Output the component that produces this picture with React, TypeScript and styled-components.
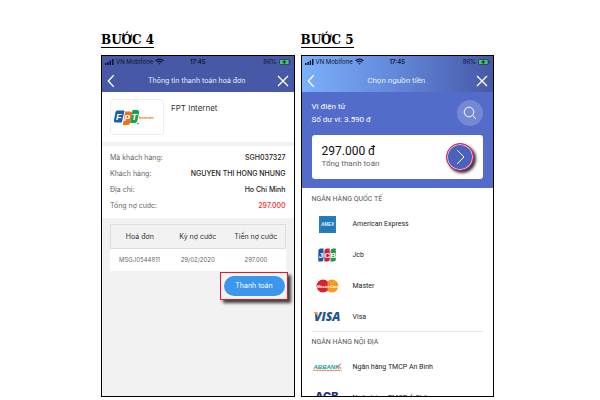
import React from "react";
import styled, { createGlobalStyle } from "styled-components";

const GlobalStyle = createGlobalStyle`
  *, *::before, *::after { box-sizing: border-box; }
  body { margin: 0; background: #fff; }
  button { font: inherit; border: 0; padding: 0; background: none; cursor: pointer; }
  h2, h3, p, dl, dd, ul { margin: 0; padding: 0; }
  svg { display: block; }
`;

const Page = styled.main`
  display: grid;
  grid-template-columns: 1fr 1fr;
  gap: 6px;
  height: 100vh;
  padding: 32px 106px 3px 101px;
`;

const Step = styled.section`
  display: flex;
  flex-direction: column;
  min-width: 0;
  min-height: 0;
`;

const StepTitle = styled.h2`
  align-self: flex-start;
  height: 16px;
  margin-bottom: 7px;
  border-bottom: 1px solid #000;
  font: bold 12px/16px "DejaVu Serif", serif;
  color: #000;
`;

const Phone = styled.div<{ $tone: "grey" | "white" }>`
  flex: 1;
  min-height: 0;
  overflow: hidden;
  border: 1px solid #000;
  background: ${(p) => (p.$tone === "grey" ? "#f2f2f2" : "#fff")};
  font-family: ${(p) => (p.$tone === "grey" ? "Inter, sans-serif" : "Roboto, sans-serif")};
  font-size: ${(p) => (p.$tone === "grey" ? "7px" : "8px")};
  line-height: 12px;
`;

const Header = styled.header<{ $gradient?: boolean }>`
  height: 36px;
  background: ${(p) =>
    p.$gradient ? "linear-gradient(90deg, #7bb0fa 0%, #6287d8 50%, #4658a6 100%)" : "#4759a6"};
`;

const StatusBar = styled.div`
  display: grid;
  grid-template-columns: 1fr auto 1fr;
  align-items: center;
  height: 11px;
  padding: 0 3px;
  font: 6px/11px Inter, sans-serif;
  color: #10142c;
`;

const StatusGroup = styled.span<{ $end?: boolean }>`
  display: flex;
  align-items: center;
  justify-content: ${(p) => (p.$end ? "flex-end" : "flex-start")};
  gap: 2px;
  white-space: nowrap;
`;

const Clock = styled.time`
  font-weight: 600;
`;

const NavBar = styled.div`
  display: grid;
  grid-template-columns: 16px 1fr 16px;
  align-items: center;
  height: 25px;
  padding: 2px 3px 0 1px;
  color: #fff;
`;

const NavTitle = styled.h3`
  text-align: center;
  font: inherit;
  color: #e9ecfa;
  white-space: nowrap;
`;

const IconButton = styled.button`
  display: grid;
  place-items: center;
  width: 16px;
  height: 16px;
  color: inherit;
`;

const Provider = styled.div`
  display: flex;
  gap: 7px;
  height: 50px;
  padding: 7px 8px;
  background: #fff;
  font-size: 8px;
  color: #333;
`;

const LogoFrame = styled.div`
  display: flex;
  align-items: center;
  width: 54px;
  height: 36px;
  padding-left: 2px;
  border: 1px solid #eee;
  border-radius: 3px;
`;

const ProviderName = styled.p`
  padding-top: 3px;
  line-height: 12px;
`;

const Details = styled.dl`
  display: grid;
  gap: 4px;
  margin-top: 4px;
  padding: 6px 8px;
  background: #fff;
`;

const DetailRow = styled.div`
  display: flex;
  justify-content: space-between;
  color: #666;
  white-space: nowrap;
`;

const DetailValue = styled.dd<{ $due?: boolean }>`
  font-weight: 500;
  color: ${(p) => (p.$due ? "#f52b35" : "#222")};
`;

const Bills = styled.div`
  padding: 6px 8px 0;
`;

const BillTable = styled.table`
  width: 100%;
  table-layout: fixed;
  border-collapse: collapse;
  font-size: 6px;
  text-align: center;
  color: #666;
  background: #fff;
`;

const HeadCell = styled.th`
  height: 24px;
  padding: 0;
  border: solid #ddd;
  border-width: 1px 0;
  background: #f2f2f2;
  font-size: 7px;
  font-weight: 400;
  color: #333;
  &:first-child { border-left-width: 1px; }
  &:last-child { border-right-width: 1px; }
`;

const BodyCell = styled.td`
  height: 22px;
  padding: 0;
`;

const PayHighlight = styled.div`
  width: 68px;
  height: 28px;
  margin: 1px -2px 0 auto;
  padding: 3px 2px 3px 3px;
  border: 1px solid #f01428;
  background: #f4f4f4;
  box-shadow: 3px 3px 3px rgba(0, 0, 0, 0.75);
`;

const PayButton = styled.button`
  width: 100%;
  height: 20px;
  border-radius: 10px;
  background: #3b96ed;
  color: #fff;
`;

const Wallet = styled.div`
  padding: 8px 10px 9px;
  background: #536bc9;
  color: #fff;
`;

const WalletTop = styled.div`
  display: flex;
  justify-content: space-between;
  height: 26px;
  margin-bottom: 9px;
  line-height: 13px;
`;

const SearchButton = styled.button`
  display: grid;
  place-items: center;
  width: 26px;
  height: 26px;
  border-radius: 50%;
  background: #7488d3;
  color: #fff;
`;

const TotalCard = styled.div`
  display: flex;
  align-items: center;
  justify-content: space-between;
  height: 44px;
  padding: 0 9px 0 10px;
  border-radius: 3px;
  background: #fff;
`;

const Amount = styled.p`
  font-size: 12px;
  line-height: 14px;
  color: #111;
`;

const AmountLabel = styled.p`
  line-height: 12px;
  color: #666;
`;

const NextButton = styled.button`
  display: grid;
  place-items: center;
  width: 28px;
  height: 28px;
  border: 1px solid #f01440;
  border-radius: 50%;
  background: #4a62bd;
  box-shadow: inset 0 0 0 1px #dcc8e0, 2px 2px 3px rgba(0, 0, 0, 0.8);
  color: #fff;
`;

const BankGroup = styled.section`
  margin: 0 10px;
  padding: 5px 0 2px;
  font-size: 7px;
  & + & { border-top: 1px solid #e8e8e8; padding-top: 4px; }
`;

const GroupTitle = styled.h3`
  margin-bottom: 7px;
  font: inherit;
  color: #555;
`;

const BankList = styled.ul`
  display: grid;
  gap: 7px;
  list-style: none;
`;

const BankRow = styled.li`
  display: grid;
  grid-template-columns: 31px 1fr;
  gap: 10px;
  align-items: center;
  height: 24px;
  color: #1c1c1c;
  white-space: nowrap;
`;

const LogoSlot = styled.span`
  display: grid;
  place-items: center;
`;

function Status() {
  return (
    <StatusBar>
      <StatusGroup>
        <svg width="9" height="6" viewBox="0 0 9 6" fill="currentColor" aria-hidden="true">
          <path d="M0 4h1.5v2H0zM2.3 3h1.5v3H2.3zM4.6 1.5h1.5V6H4.6zM7 0h1.5v6H7z" />
        </svg>
        VN Mobifone
        <svg width="9" height="7" viewBox="0 0 9 7" fill="none" stroke="currentColor" aria-hidden="true">
          <path d="M.6 2.7a5.5 5.5 0 0 1 7.8 0" strokeWidth="1.4" />
          <path d="M2.1 4.3a3.5 3.5 0 0 1 4.8 0" strokeWidth="1.3" />
          <path d="M3.4 5.3h2.2L4.5 6.7z" fill="currentColor" stroke="none" />
        </svg>
      </StatusGroup>
      <Clock>17:45</Clock>
      <StatusGroup $end>
        86%
        <svg width="12" height="6" viewBox="0 0 12 6" aria-hidden="true">
          <rect x=".4" y=".4" width="10" height="5.2" rx="1.3" fill="none" stroke="#263b50" strokeWidth=".7" />
          <rect x="1" y="1" width="8.5" height="4" rx=".7" fill="#43cc61" />
          <path d="M5.8.6 3 3.4h2L4.6 5.4l3-2.9H5.7z" fill="#15252e" />
          <path d="M11.2 2v2" stroke="#263b50" />
        </svg>
      </StatusGroup>
    </StatusBar>
  );
}

function Top({ title, gradient }: { title: string; gradient?: boolean }) {
  return (
    <Header $gradient={gradient}>
      <Status />
      <NavBar>
        <IconButton aria-label="Quay lại">
          <svg width="8" height="14" viewBox="0 0 8 14" fill="none" stroke="currentColor" strokeWidth="1.3">
            <path d="M6.7 1.300 1.300 7l5.400 5.700" />
          </svg>
        </IconButton>
        <NavTitle>{title}</NavTitle>
        <IconButton aria-label="Đóng">
          <svg width="12" height="12" viewBox="0 0 12 12" stroke="currentColor" strokeWidth="1.3">
            <path d="m1 1 10 10M11 1 1 11" />
          </svg>
        </IconButton>
      </NavBar>
    </Header>
  );
}

function FptLogo() {
  return (
    <svg width="42" height="18" viewBox="0 0 42 18" role="img" aria-label="FPT Internet">
      <path d="M4 2.500h7.500L8.800 14.500H2.500Q.5 14.500 1 12L2.300 5Q2.700 2.500 4 2.500z" fill="#1b5eab" />
      <path d="M12 3.500h5q2.500 0 2 2.500l-1.600 8q-.4 3-3 3h-4.600z" fill="#f26f21" />
      <path d="M19.500 2h4.500q2.500 0 2 2.500l-1.600 8q-.4 2.500-2.600 2.500h-4.600z" fill="#17a34a" />
      <g fill="#fff" fontFamily="Liberation Sans, sans-serif" fontWeight="bold" fontStyle="italic" fontSize="9">
        <text x="3" y="12">F</text>
        <text x="11" y="13">P</text>
        <text x="18.500" y="12">T</text>
      </g>
      <circle cx="25" cy="15.500" r=".8" fill="#1b5eab" />
      <text x="26" y="10.500" fill="#f26f21" fontFamily="Liberation Sans, sans-serif" fontWeight="bold" fontSize="4">
        Internet
      </text>
    </svg>
  );
}

function AmexLogo() {
  return (
    <svg width="17" height="17" viewBox="0 0 17 17" role="img" aria-label="American Express">
      <rect width="17" height="17" fill="#2279b8" />
      <path d="M1 1h15v15H1z" fill="none" stroke="#3d8cc4" strokeWidth=".5" />
      <text x="2" y="10.200" fill="#e4f1fa" fontFamily="Liberation Sans, sans-serif" fontWeight="bold" fontStyle="italic" fontSize="4.500">
        AMEX
      </text>
    </svg>
  );
}

function JcbLogo() {
  return (
    <svg width="18" height="14" viewBox="0 0 18 14" role="img" aria-label="JCB">
      <path d="M2.500.5h3v11q0 2-2 2H.3V3Q.3.5 2.500.5z" fill="#1c5aa8" />
      <path d="M8.700.5h3v11q0 2-2 2H6.400V3Q6.400.5 8.700.5z" fill="#cf2040" />
      <path d="M14.800.5h3v11q0 2-2 2h-3.300V3q0-2.500 2.300-2.500z" fill="#259747" />
      <g fill="#fff" fontFamily="Liberation Sans, sans-serif" fontWeight="bold" fontSize="8">
        <text x=".7" y="9.800">J</text>
        <text x="6.300" y="9.800">C</text>
        <text x="12.300" y="9.800">B</text>
      </g>
    </svg>
  );
}

function MasterLogo() {
  return (
    <svg width="23" height="14" viewBox="0 0 23 14" role="img" aria-label="MasterCard">
      <circle cx="16" cy="7" r="6.500" fill="#f59b22" />
      <circle cx="7" cy="7" r="6.500" fill="#d9222a" />
      <path d="M11.500 2.300a6.500 6.500 0 0 1 0 9.400" fill="#f59b22" />
      <text x="1" y="8.500" fill="#fff" fontFamily="Liberation Sans, sans-serif" fontWeight="bold" fontStyle="italic" fontSize="4">
        MasterCard
      </text>
    </svg>
  );
}

function VisaLogo() {
  return (
    <svg width="31" height="16" viewBox="0 0 31 16" role="img" aria-label="Visa">
      <text x="2" y="12" fill="#1c5596" fontFamily="Open Sans, sans-serif" fontWeight="800" fontStyle="italic" fontSize="12">
        VISA
      </text>
      <path d="M1 3h4L6.200 8Q4.500 4.500 1 3z" fill="#f3a52b" />
    </svg>
  );
}

function AbBankLogo() {
  return (
    <svg width="29" height="9" viewBox="0 0 29 9" role="img" aria-label="ABBANK">
      <text x=".5" y="5.500" fill="#159a9c" fontFamily="Liberation Sans, sans-serif" fontWeight="bold" fontStyle="italic" fontSize="6">
        ABBANK
      </text>
      <path d="m28.800.8-3 2.200 3 2.500h-1.600L24.800 3l2.400-2.200z" fill="#ef6d43" />
      <path d="M.5 7.300h28" stroke="#ee8259" strokeWidth="1.300" strokeDasharray="2.200 .5" />
    </svg>
  );
}

function AcbLogo() {
  return (
    <svg width="27" height="14" viewBox="0 0 27 14" role="img" aria-label="ACB">
      <text x="1" y="9" fill="#1d3384" fontFamily="Inter, sans-serif" fontWeight="800" fontSize="11">
        ACB
      </text>
    </svg>
  );
}

const details = [
  { label: "Mã khách hàng:", value: "SGH037327" },
  { label: "Khách hàng:", value: "NGUYEN THI HONG NHUNG" },
  { label: "Địa chỉ:", value: "Ho Chi Minh" },
  { label: "Tổng nợ cước:", value: "297.000", due: true },
];

const groups = [
  {
    title: "NGÂN HÀNG QUỐC TẾ",
    banks: [
      { name: "American Express", Logo: AmexLogo },
      { name: "Jcb", Logo: JcbLogo },
      { name: "Master", Logo: MasterLogo },
      { name: "Visa", Logo: VisaLogo },
    ],
  },
  {
    title: "NGÂN HÀNG NỘI ĐỊA",
    banks: [
      { name: "Ngân hàng TMCP An Bình", Logo: AbBankLogo },
      { name: "Ngân hàng TMCP Á Châu", Logo: AcbLogo },
    ],
  },
];

export default function App() {
  return (
    <>
      <GlobalStyle />
      <Page>
        <Step>
          <StepTitle>BƯỚC 4</StepTitle>
          <Phone $tone="grey">
            <Top title="Thông tin thanh toán hoá đơn" />
            <Provider>
              <LogoFrame>
                <FptLogo />
              </LogoFrame>
              <ProviderName>FPT Internet</ProviderName>
            </Provider>
            <Details>
              {details.map((d) => (
                <DetailRow key={d.label}>
                  <dt>{d.label}</dt>
                  <DetailValue $due={d.due}>{d.value}</DetailValue>
                </DetailRow>
              ))}
            </Details>
            <Bills>
              <BillTable>
                <thead>
                  <tr>
                    <HeadCell>Hoá đơn</HeadCell>
                    <HeadCell>Kỳ nợ cước</HeadCell>
                    <HeadCell>Tiền nợ cước</HeadCell>
                  </tr>
                </thead>
                <tbody>
                  <tr>
                    <BodyCell>MSGJ0544811</BodyCell>
                    <BodyCell>29/02/2020</BodyCell>
                    <BodyCell>297.000</BodyCell>
                  </tr>
                </tbody>
              </BillTable>
              <PayHighlight>
                <PayButton>Thanh toán</PayButton>
              </PayHighlight>
            </Bills>
          </Phone>
        </Step>
        <Step>
          <StepTitle>BƯỚC 5</StepTitle>
          <Phone $tone="white">
            <Top title="Chọn nguồn tiền" gradient />
            <Wallet>
              <WalletTop>
                <div>
                  <p>Ví điện tử</p>
                  <p>Số dư ví: 3.590 đ</p>
                </div>
                <SearchButton aria-label="Tìm kiếm">
                  <svg width="14" height="14" viewBox="0 0 14 14" fill="none" stroke="currentColor">
                    <circle cx="6" cy="6" r="4.800" />
                    <path d="m9.500 9.500 3.500 3.500" />
                  </svg>
                </SearchButton>
              </WalletTop>
              <TotalCard>
                <div>
                  <Amount>297.000 đ</Amount>
                  <AmountLabel>Tổng thanh toán</AmountLabel>
                </div>
                <NextButton aria-label="Tiếp tục">
                  <svg width="9" height="16" viewBox="0 0 9 16" fill="none" stroke="currentColor">
                    <path d="m1 1 7 7-7 7" />
                  </svg>
                </NextButton>
              </TotalCard>
            </Wallet>
            {groups.map((g) => (
              <BankGroup key={g.title}>
                <GroupTitle>{g.title}</GroupTitle>
                <BankList>
                  {g.banks.map(({ name, Logo }) => (
                    <BankRow key={name}>
                      <LogoSlot>
                        <Logo />
                      </LogoSlot>
                      {name}
                    </BankRow>
                  ))}
                </BankList>
              </BankGroup>
            ))}
          </Phone>
        </Step>
      </Page>
    </>
  );
}
